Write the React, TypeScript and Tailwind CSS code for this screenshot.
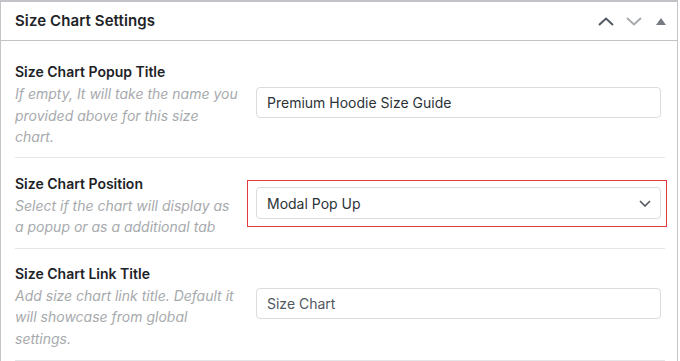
import React from "react";

const font = { fontFamily: "Inter, 'Noto Sans', sans-serif" };

function Row({
  label,
  lines,
  children,
  className = "",
}: {
  label: string;
  lines: string[];
  children: React.ReactNode;
  className?: string;
}) {
  return (
    <div className={`flex items-center border-b border-[#e4e5e7] ${className}`}>
      <div className="w-[241px] shrink-0">
        <div className="text-[14px] font-semibold leading-[20px] text-[#1d2327]">{label}</div>
        <div className="mt-[1px] text-[14px] italic leading-[21.5px] text-[#a7aaad]">
          {lines.map((l, i) => (
            <div key={i} className="whitespace-nowrap">
              {l}
            </div>
          ))}
        </div>
      </div>
      <div className="flex-1 mr-[4px] mb-[5px]">{children}</div>
    </div>
  );
}

export default function App() {
  return (
    <div className="w-[680px] h-[361px] bg-white overflow-hidden" style={font}>
      <div className="w-[678px] bg-white border border-[#c3c4c7] border-b-0 border-t-2">
        <div className="h-[39px] flex items-center justify-between border-b border-[#c3c4c7] pl-[14px] pr-[11px]">
          <div className="text-[15px] font-semibold text-[#1d2327] tracking-[0.1px]">Size Chart Settings</div>
          <div className="flex items-center gap-[12px]">
            <svg width="16" height="9" viewBox="0 0 16 9">
              <path d="M1 8 L8 1.5 L15 8" fill="none" stroke="#50575e" strokeWidth="2" />
            </svg>
            <svg width="16" height="9" viewBox="0 0 16 9">
              <path d="M1 1 L8 7.5 L15 1" fill="none" stroke="#a7aaad" strokeWidth="2" />
            </svg>
            <svg width="10" height="7" viewBox="0 0 10 7" className="ml-[2px]">
              <path d="M0 7 L5 0 L10 7 Z" fill="#787c82" />
            </svg>
          </div>
        </div>
        <div className="pl-[14px] pr-[12px]">
          <Row
            label="Size Chart Popup Title"
            lines={["If empty, It will take the name you", "provided above for this size", "chart."]}
            className="pt-[21px] pb-[9px]"
          >
            <div className="h-[31px] flex items-center rounded-[4px] border border-[#dcdcde] px-[10px] text-[14px] text-[#2c3338]">
              Premium Hoodie Size Guide
            </div>
          </Row>
          <Row
            label="Size Chart Position"
            lines={["Select if the chart will display as", "a popup or as a additional tab"]}
            className="pt-[16px] pb-[10px]"
          >
            <div className="relative">
              <div className="absolute -left-[9px] -right-[6px] -top-[7px] -bottom-[8px] border border-[#e0393e] pointer-events-none" />
              <div className="h-[32px] flex items-center justify-between rounded-[4px] border border-[#dcdcde] pl-[10px] pr-[9px] text-[14px] text-[#2c3338]">
                <span>Modal Pop Up</span>
                <svg width="12" height="7" viewBox="0 0 12 7">
                  <path d="M1 1 L6 6 L11 1" fill="none" stroke="#50575e" strokeWidth="1.6" />
                </svg>
              </div>
            </div>
          </Row>
          <Row
            label="Size Chart Link Title"
            lines={["Add size chart link title. Default it", "will showcase from global", "settings."]}
            className="pt-[15px] pb-[11px]"
          >
            <div className="h-[31px] flex items-center rounded-[4px] border border-[#dcdcde] px-[10px] text-[14px] text-[#50575e]">
              Size Chart
            </div>
          </Row>
        </div>
      </div>
    </div>
  );
}
